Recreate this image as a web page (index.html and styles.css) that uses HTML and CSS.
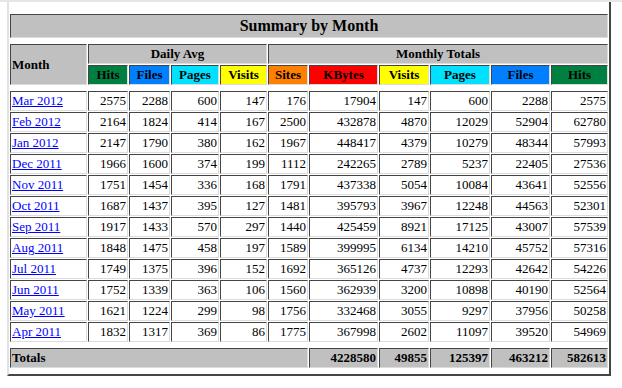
FILE: index.html
```html
<!DOCTYPE html>
<html>
<head>
<meta charset="utf-8">
<title>Summary by Month</title>
<link rel="stylesheet" href="styles.css">
</head>
<body>
<div class="rule"></div>
<table class="summary">
  <colgroup>
    <col class="c-month"><col class="c-hits1"><col class="c-files1"><col class="c-pages1"><col class="c-visits1">
    <col class="c-sites"><col class="c-kbytes"><col class="c-visits2"><col class="c-pages2"><col class="c-files2"><col class="c-hits2">
  </colgroup>
  <tr class="spacer top"><td colspan="11"></td></tr>
  <tr><th colspan="11" class="title gray">Summary by Month</th></tr>
  <tr class="spacer"><td colspan="11"></td></tr>
  <tr>
    <th rowspan="2" class="gray left">Month</th>
    <th colspan="4" class="gray">Daily Avg</th>
    <th colspan="6" class="gray">Monthly Totals</th>
  </tr>
  <tr>
    <th class="hits">Hits</th>
    <th class="files">Files</th>
    <th class="pages">Pages</th>
    <th class="visits">Visits</th>
    <th class="sites">Sites</th>
    <th class="kbytes">KBytes</th>
    <th class="visits">Visits</th>
    <th class="pages">Pages</th>
    <th class="files">Files</th>
    <th class="hits">Hits</th>
  </tr>
  <tr class="spacer"><td colspan="11"></td></tr>
  <tr><td class="month"><a href="#">Mar 2012</a></td><td>2575</td><td>2288</td><td>600</td><td>147</td><td>176</td><td>17904</td><td>147</td><td>600</td><td>2288</td><td>2575</td></tr>
  <tr><td class="month"><a href="#">Feb 2012</a></td><td>2164</td><td>1824</td><td>414</td><td>167</td><td>2500</td><td>432878</td><td>4870</td><td>12029</td><td>52904</td><td>62780</td></tr>
  <tr><td class="month"><a href="#">Jan 2012</a></td><td>2147</td><td>1790</td><td>380</td><td>162</td><td>1967</td><td>448417</td><td>4379</td><td>10279</td><td>48344</td><td>57993</td></tr>
  <tr><td class="month"><a href="#">Dec 2011</a></td><td>1966</td><td>1600</td><td>374</td><td>199</td><td>1112</td><td>242265</td><td>2789</td><td>5237</td><td>22405</td><td>27536</td></tr>
  <tr><td class="month"><a href="#">Nov 2011</a></td><td>1751</td><td>1454</td><td>336</td><td>168</td><td>1791</td><td>437338</td><td>5054</td><td>10084</td><td>43641</td><td>52556</td></tr>
  <tr><td class="month"><a href="#">Oct 2011</a></td><td>1687</td><td>1437</td><td>395</td><td>127</td><td>1481</td><td>395793</td><td>3967</td><td>12248</td><td>44563</td><td>52301</td></tr>
  <tr><td class="month"><a href="#">Sep 2011</a></td><td>1917</td><td>1433</td><td>570</td><td>297</td><td>1440</td><td>425459</td><td>8921</td><td>17125</td><td>43007</td><td>57539</td></tr>
  <tr><td class="month"><a href="#">Aug 2011</a></td><td>1848</td><td>1475</td><td>458</td><td>197</td><td>1589</td><td>399995</td><td>6134</td><td>14210</td><td>45752</td><td>57316</td></tr>
  <tr><td class="month"><a href="#">Jul 2011</a></td><td>1749</td><td>1375</td><td>396</td><td>152</td><td>1692</td><td>365126</td><td>4737</td><td>12293</td><td>42642</td><td>54226</td></tr>
  <tr><td class="month"><a href="#">Jun 2011</a></td><td>1752</td><td>1339</td><td>363</td><td>106</td><td>1560</td><td>362939</td><td>3200</td><td>10898</td><td>40190</td><td>52564</td></tr>
  <tr><td class="month"><a href="#">May 2011</a></td><td>1621</td><td>1224</td><td>299</td><td>98</td><td>1756</td><td>332468</td><td>3055</td><td>9297</td><td>37956</td><td>50258</td></tr>
  <tr><td class="month"><a href="#">Apr 2011</a></td><td>1832</td><td>1317</td><td>369</td><td>86</td><td>1775</td><td>367998</td><td>2602</td><td>11097</td><td>39520</td><td>54969</td></tr>
  <tr class="spacer"><td colspan="11"></td></tr>
  <tr>
    <th colspan="6" class="gray left">Totals</th>
    <th class="gray right">4228580</th>
    <th class="gray right">49855</th>
    <th class="gray right">125397</th>
    <th class="gray right">463212</th>
    <th class="gray right">582613</th>
  </tr>
  <tr class="spacer"><td colspan="11"></td></tr>
</table>
</body>
</html>
```

FILE: styles.css
```css
html, body {
  margin: 0;
  padding: 0;
  background: #ffffff;
}

body {
  font-family: "Liberation Serif", "Times New Roman", serif;
  font-size: 13px;
  color: #000000;
}

.rule {
  border-top: 2px solid #e6e6e6;
  height: 0;
}

.summary {
  margin-left: 7px;
  width: 604px;
  table-layout: fixed;
  border-collapse: separate;
  border-spacing: 1px;
  border-style: solid;
  border-width: 0 2px 2px 2px;
  border-color: #e2e2e2 #454545 #454545 #e2e2e2;
}

.c-month { width: 77px; }
.c-hits1 { width: 40px; }
.c-files1 { width: 41px; }
.c-pages1 { width: 48px; }
.c-visits1 { width: 47px; }
.c-sites { width: 40px; }
.c-kbytes { width: 69px; }
.c-visits2 { width: 50px; }
.c-pages2 { width: 60px; }
.c-files2 { width: 59px; }
.c-hits2 { width: 57px; }

.summary td,
.summary th {
  border-style: solid;
  border-width: 1px;
  border-color: #454545 #dcdcdc #dcdcdc #454545;
  padding: 0 1px;
  height: 18px;
  line-height: 18px;
  font-size: 13px;
  white-space: nowrap;
  overflow: hidden;
}

.summary td {
  text-align: right;
  font-weight: normal;
}

.summary th {
  text-align: center;
  font-weight: bold;
}

.summary tr.spacer td {
  border: 0;
  padding: 0;
  height: 4px;
  line-height: 0;
  font-size: 0;
}

.summary tr.spacer.top td {
  height: 10px;
}

.summary th.title {
  font-size: 16px;
  height: 22px;
  line-height: 22px;
}

.summary th.left { text-align: left; }
.summary th.right { text-align: right; }

.summary td.month { text-align: left; }

.summary a {
  color: #0000ff;
  text-decoration: underline;
}

.gray { background: #c0c0c0; }
.hits { background: #008040; }
.files { background: #0080ff; }
.pages { background: #00e0ff; }
.visits { background: #ffff00; }
.sites { background: #ff8000; }
.kbytes { background: #ff0000; }
```
